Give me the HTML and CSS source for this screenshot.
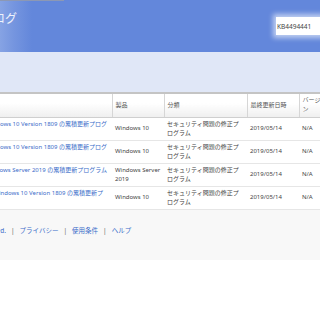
FILE: index.html
```html
<!DOCTYPE html>
<html lang="ja">
  <head>
    <meta charset="utf-8" />
    <title>Microsoft Update カタログ</title>
    <link rel="stylesheet" href="styles.css">
  </head>
  <body>
    <!-- Header -->
    <header class="header">
      <div class="topline"></div>
      <div class="header-row">
        <h1 class="brand">Microsoft Update カタログ</h1>
        <input class="search" type="text" value="KB4494441" />
      </div>
    </header>

    <div class="page">
      <div class="band"></div>

      <table class="results">
        <colgroup>
          <col class="c-title">
          <col class="c-product">
          <col class="c-class">
          <col class="c-date">
          <col class="c-version">
          <col class="c-size">
        </colgroup>
        <thead>
          <tr>
            <th>タイトル</th>
            <th>製品</th>
            <th>分類</th>
            <th>最終更新日時</th>
            <th>バージョン</th>
            <th>サイズ</th>
          </tr>
        </thead>
        <tbody>
          <tr>
            <td class="title">
              <div class="line1"><a href="#">2019-05 x64 ベース システム用 Windows 10 Version 1809 の累積更新プログ</a></div>
              <div class="line2"><a href="#">ラム (KB4494441)</a></div>
            </td>
            <td>Windows 10</td>
            <td>セキュリティ問題の修正プログラム</td>
            <td>2019/05/14</td>
            <td>N/A</td>
            <td>533.2 MB</td>
          </tr>
          <tr>
            <td class="title">
              <div class="line1"><a href="#">2019-05 x86 ベース システム用 Windows 10 Version 1809 の累積更新プログ</a></div>
              <div class="line2"><a href="#">ラム (KB4494441)</a></div>
            </td>
            <td>Windows 10</td>
            <td>セキュリティ問題の修正プログラム</td>
            <td>2019/05/14</td>
            <td>N/A</td>
            <td>218.4 MB</td>
          </tr>
          <tr>
            <td class="title">
              <div class="line1"><a href="#">2019-05 x64 ベース システム用 Windows Server 2019 の累積更新プログラム</a></div>
              <div class="line2"><a href="#">(KB4494441)</a></div>
            </td>
            <td>Windows Server 2019</td>
            <td>セキュリティ問題の修正プログラム</td>
            <td>2019/05/14</td>
            <td>N/A</td>
            <td>533.2 MB</td>
          </tr>
          <tr>
            <td class="title short">
              <div class="line1"><a href="#">2019-05 ARM64 ベース システム用 Windows 10 Version 1809 の累積更新プ</a></div>
              <div class="line2"><a href="#">ログラム (KB4494441)</a></div>
            </td>
            <td>Windows 10</td>
            <td>セキュリティ問題の修正プログラム</td>
            <td>2019/05/14</td>
            <td>N/A</td>
            <td>579.6 MB</td>
          </tr>
        </tbody>
      </table>

      <!-- Footer -->
      <footer class="footer">
        <span class="copy">© 2019 Microsoft Corporation. All Rights Reserved.</span>
        <span class="sep">|</span>
        <a href="#">プライバシー</a>
        <span class="sep">|</span>
        <a href="#">使用条件</a>
        <span class="sep">|</span>
        <a href="#">ヘルプ</a>
      </footer>
    </div>
  </body>
</html>
```

FILE: styles.css
```css
* {
  margin: 0;
  padding: 0;
  box-sizing: border-box;
}

body {
  width: 320px;
  height: 320px;
  overflow: hidden;
  background-color: #fff;
  font-family: "Noto Sans", "Noto Sans CJK JP", sans-serif;
  color: #333;
}

a {
  color: #3a6cc9;
  text-decoration: none;
}

/* Header */
.header {
  height: 52px;
  background: linear-gradient(to right, #86a3e4 0, #7595df 14px, #6387db 32px, #6387db 100%);
}

.topline {
  width: 64px;
  height: 1px;
  background-color: #8c98b4;
}

.header-row {
  display: flex;
  justify-content: space-between;
  align-items: flex-start;
}

.brand {
  width: 200px;
  margin-left: -183px;
  margin-top: 8px;
  text-align: right;
  white-space: nowrap;
  font-size: 12px;
  font-weight: normal;
  color: #eef2fb;
}

.search {
  width: 64px;
  height: 18px;
  margin-top: 16px;
  margin-right: -20px;
  padding: 0 1px;
  border: none;
  background: #fff;
  box-shadow: 0 0 5px 3px rgba(255, 255, 255, 0.6);
  font-family: "Noto Sans", sans-serif;
  font-size: 6.5px;
  color: #444;
  outline: none;
}

/* Page */
.page {
  margin-left: -170px;
  width: 620px;
  background-color: #f8f8f8;
  padding-bottom: 10px;
}

.band {
  height: 40px;
  background-color: #e0e7f7;
}

.results {
  width: 100%;
  table-layout: fixed;
  border-collapse: collapse;
  background-color: #fff;
  font-size: 6px;
  line-height: 9px;
  border-top: 2px solid #c4c4c4;
  border-bottom: 1px solid #d8d8d8;
}

.c-title { width: 282px; }
.c-product { width: 52px; }
.c-class { width: 83px; }
.c-date { width: 52px; }
.c-version { width: 32px; }
.c-size { width: 119px; }

.results th {
  height: 24px;
  padding: 0 3px;
  text-align: left;
  font-weight: normal;
  color: #555;
  background: linear-gradient(#fff, #fff 40%, #efefef);
  border-right: 1px solid #d6d6d6;
  border-bottom: 1px solid #cfcfcf;
}

.results td {
  height: 23px;
  padding: 2px 3px;
  vertical-align: middle;
  color: #444;
  border-bottom: 1px solid #e6e6e6;
}

.results td.title {
  padding-right: 5px;
}

.line1 {
  white-space: nowrap;
  text-align: right;
}

.title.short .line1 {
  padding-right: 4px;
}

.line2 {
  white-space: nowrap;
}

/* Footer */
.footer {
  padding: 16px 0 14px 0;
  font-size: 6.5px;
  line-height: 10px;
  display: flex;
  align-items: center;
}

.copy {
  width: 176px;
  text-align: right;
  white-space: nowrap;
  color: #3a6cc9;
}

.sep {
  color: #666;
  margin: 0 5px;
}
```
